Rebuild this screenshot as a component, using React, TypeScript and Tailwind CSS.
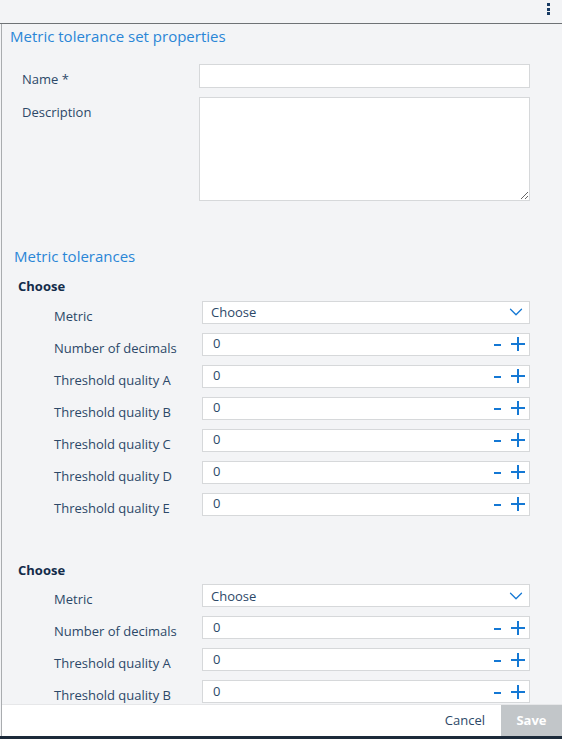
import { ChevronDown } from 'lucide-react'

const GROUP_A = ['Number of decimals', 'Threshold quality A', 'Threshold quality B', 'Threshold quality C', 'Threshold quality D', 'Threshold quality E']
const GROUP_B = ['Number of decimals', 'Threshold quality A', 'Threshold quality B']

function Stepper() {
  return (
    <div className="flex items-center gap-[10px] pr-[4px] text-[#1478d4]">
      <svg width="7" height="14" viewBox="0 0 7 14" aria-hidden="true">
        <rect x="0" y="7" width="7" height="2" fill="currentColor" />
      </svg>
      <svg width="14" height="14" viewBox="0 0 14 14" aria-hidden="true">
        <rect x="0" y="6" width="14" height="2" fill="currentColor" />
        <rect x="6" y="0" width="2" height="14" fill="currentColor" />
      </svg>
    </div>
  )
}

function Row({ label, children }: { label: string; children: React.ReactNode }) {
  return (
    <div className="flex h-[32px] items-start">
      <div className="w-[188px] shrink-0 whitespace-nowrap pl-[40px] pt-[6px] text-[13px] leading-[18px] text-[#2c4868]">{label}</div>
      {children}
    </div>
  )
}

function Group({ rows }: { rows: string[] }) {
  return (
    <div>
      <p className="pl-[4px] text-[13px] font-bold text-[#132c4a]">Choose</p>
      <div className="mt-[4px]">
        <Row label="Metric">
          <div className="flex h-[23px] w-[328px] items-center justify-between border border-[#d6d8da] bg-white pl-[8px] pr-[2px] pt-[2px] text-[13px] text-[#2c4868]">
            <span>Choose</span>
            <ChevronDown size={22} strokeWidth={1.4} className="-mt-[2px] text-[#1478d4]" />
          </div>
        </Row>
        {rows.map((r) => (
          <Row key={r} label={r}>
            <div className="flex h-[23px] w-[328px] items-center justify-between border border-[#d6d8da] bg-white pl-[10px] text-[13px] text-[#2c4868]">
              <span>0</span>
              <Stepper />
            </div>
          </Row>
        ))}
      </div>
    </div>
  )
}

export default function App() {
  return (
    <div className="flex h-[739px] w-[562px] flex-col overflow-hidden bg-[#f3f4f6] font-['Open_Sans',sans-serif]">
      {/* top bar */}
      <div className="flex h-[24px] shrink-0 items-start justify-end border-b border-[#6e7275] pr-[12px] pt-[3px]">
        <div className="flex flex-col gap-[1.5px]">
          <span className="h-[3px] w-[3px] bg-[#183b63]" />
          <span className="h-[3px] w-[3px] bg-[#183b63]" />
          <span className="h-[3px] w-[3px] bg-[#183b63]" />
        </div>
      </div>

      <div className="ml-px flex min-h-0 flex-1 flex-col border-l border-[#a9acaf]">
        <div className="min-h-0 flex-1 overflow-hidden">
          <h2 className="pl-[8px] pt-[1px] text-[15px] text-[#2a86d6]">Metric tolerance set properties</h2>

          <div className="mt-[16px] flex h-[24px] items-start">
            <label className="w-[197px] shrink-0 pl-[20px] pt-[6px] text-[13px] leading-[18px] text-[#2c4868]">Name *</label>
            <div className="h-[24px] w-[331px] border border-[#d6d8da] bg-white" />
          </div>
          <div className="mt-[9px] flex items-start">
            <label className="w-[197px] shrink-0 pl-[20px] pt-[6px] text-[13px] leading-[18px] text-[#2c4868]">Description</label>
            <textarea className="h-[104px] w-[331px] resize-y border border-[#d6d8da] bg-white" />
          </div>

          <h2 className="mt-[44px] pl-[12px] text-[15px] text-[#2a86d6]">Metric tolerances</h2>

          <div className="mt-[10px] pl-[12px]">
            <Group rows={GROUP_A} />
          </div>
          <div className="mt-[36px] pl-[12px]">
            <Group rows={GROUP_B} />
          </div>
        </div>

        {/* footer */}
        <div className="flex h-[32px] shrink-0 items-stretch justify-end border-t border-[#e6e7e9] bg-white">
          <button className="px-[16px] text-[13px] text-[#2c4868]">Cancel</button>
          <button className="w-[61px] bg-[#c2c6c9] text-[13px] font-bold text-white">Save</button>
        </div>
      </div>
      <div className="h-[3px] shrink-0 bg-[#1c2a3a]" />
    </div>
  )
}
